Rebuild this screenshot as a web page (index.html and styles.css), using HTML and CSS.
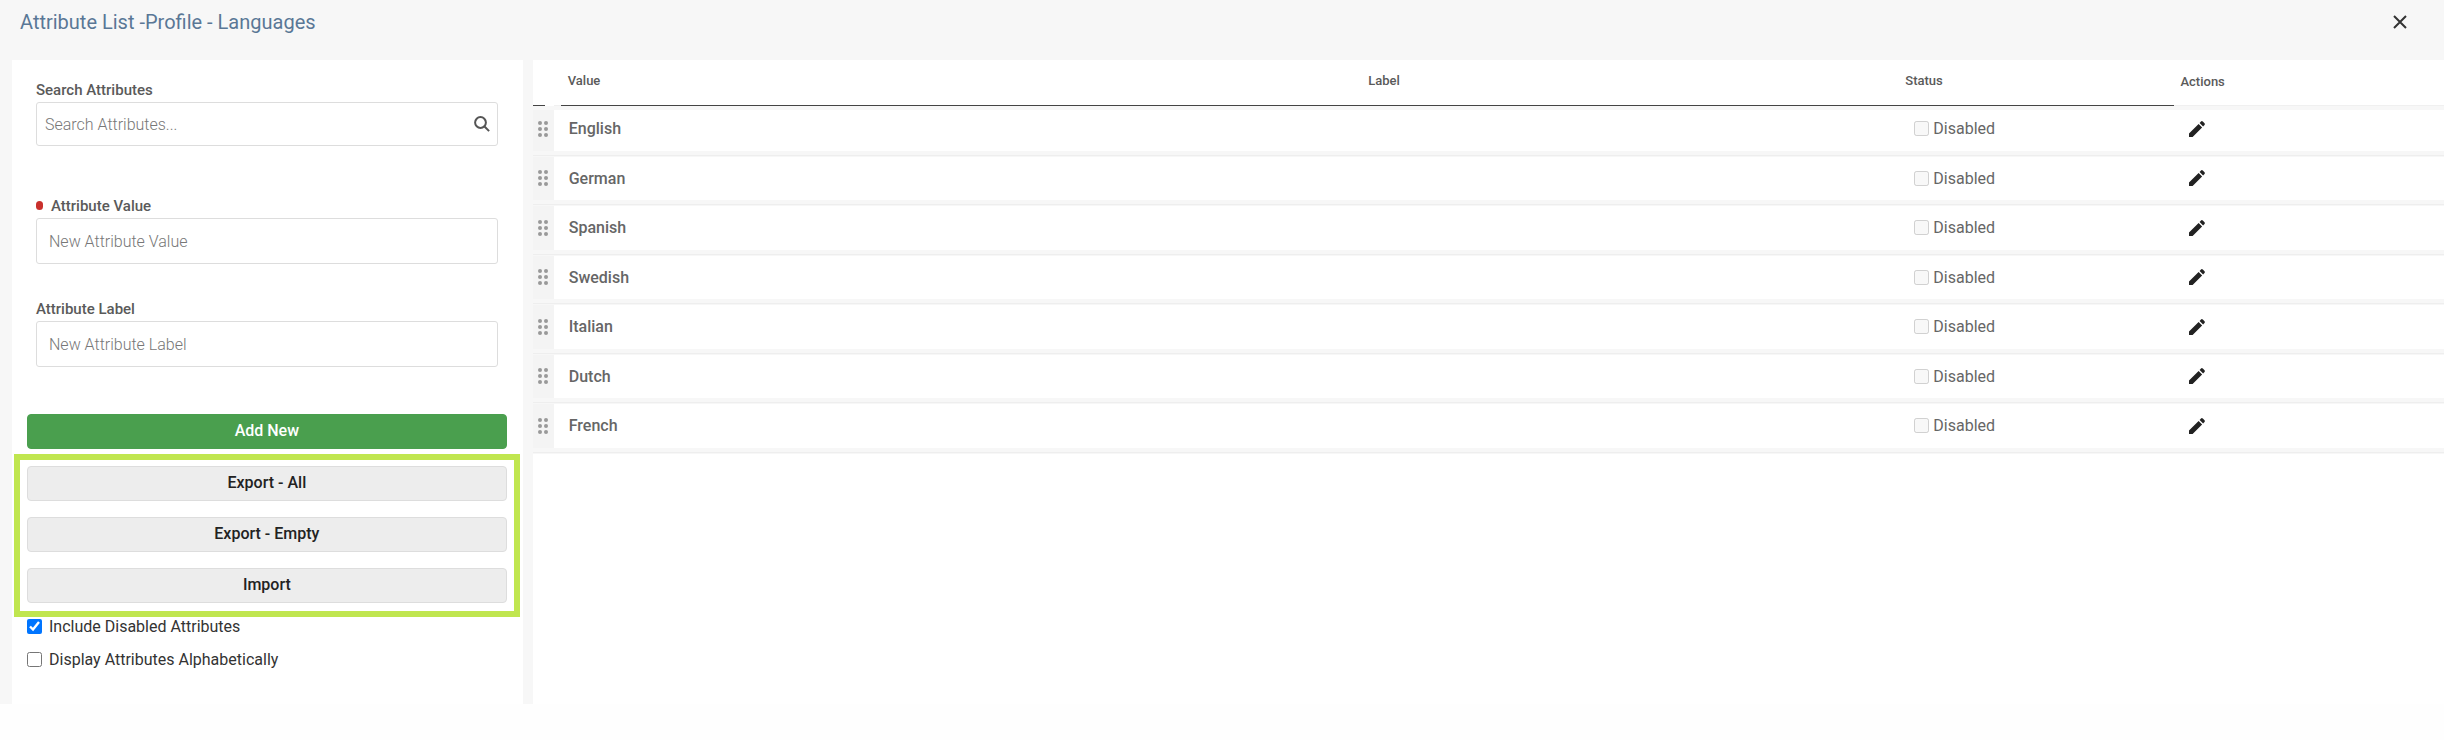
FILE: index.html
```html
<!DOCTYPE html>
<html lang="en">
<head>
<meta charset="utf-8">
<title>Attribute List</title>
<link rel="stylesheet" href="styles.css">
</head>
<body>
<svg class="sprite" aria-hidden="true">
  <symbol id="grip" viewBox="0 0 10 16"><circle cx="2" cy="2" r="2"/><circle cx="8" cy="2" r="2"/><circle cx="2" cy="8" r="2"/><circle cx="8" cy="8" r="2"/><circle cx="2" cy="14" r="2"/><circle cx="8" cy="14" r="2"/></symbol>
  <symbol id="pencil" viewBox="0 0 16 16"><path d="M0 16v-3.6L9.6 2.9l3.5 3.5L3.6 16zM10.6 1.900 12 .5q.9-.8 1.800 0l1.700 1.700q.8.9 0 1.800L14.100 5.400z"/></symbol>
</svg>
<div class="dialog">
  <header class="dialog-header">
    <h1 class="title">Attribute List -Profile - Languages</h1>
    <button class="close" type="button" aria-label="Close"><svg width="14" height="14" viewBox="0 0 14 14"><path d="M1 1l12 12M13 1L1 13"/></svg></button>
  </header>
  <main class="content">
    <form class="sidebar">
      <div class="field field-search">
        <label class="label" for="search">Search Attributes</label>
        <div class="search-box">
          <input class="search-input" id="search" type="text" placeholder="Search Attributes...">
          <svg class="search-icon" width="16" height="16" viewBox="0 0 16 16"><circle cx="6.500" cy="6.500" r="5.400"/><path d="M10.500 10.500l4.600 4.600"/></svg>
        </div>
      </div>
      <div class="field field-value">
        <label class="label required" for="value">Attribute Value</label>
        <input class="input" id="value" type="text" placeholder="New Attribute Value">
      </div>
      <div class="field field-label">
        <label class="label" for="label">Attribute Label</label>
        <input class="input" id="label" type="text" placeholder="New Attribute Label">
      </div>
      <button class="button primary" type="button">Add New</button>
      <div class="highlight">
        <button class="button" type="button">Export - All</button>
        <button class="button" type="button">Export - Empty</button>
        <button class="button" type="button">Import</button>
      </div>
      <div class="options">
        <label class="option"><input class="check" type="checkbox" checked>Include Disabled Attributes</label>
        <label class="option"><input class="check" type="checkbox">Display Attributes Alphabetically</label>
      </div>
    </form>
    <section class="list">
      <table class="table">
        <colgroup><col class="col-grip"><col class="col-value"><col class="col-label"><col class="col-status"><col></colgroup>
        <thead>
          <tr><th class="th-grip"></th><th class="th-value">Value</th><th>Label</th><th>Status</th><th class="th-actions">Actions</th></tr>
        </thead>
        <tbody>
          <tr><td class="grip"><svg class="grip-icon"><use href="#grip"/></svg></td><td class="name">English</td><td></td><td><label class="status"><input class="check" type="checkbox" disabled>Disabled</label></td><td><button class="edit" type="button" aria-label="Edit English"><svg class="edit-icon"><use href="#pencil"/></svg></button></td></tr>
          <tr><td class="grip"><svg class="grip-icon"><use href="#grip"/></svg></td><td class="name">German</td><td></td><td><label class="status"><input class="check" type="checkbox" disabled>Disabled</label></td><td><button class="edit" type="button" aria-label="Edit German"><svg class="edit-icon"><use href="#pencil"/></svg></button></td></tr>
          <tr><td class="grip"><svg class="grip-icon"><use href="#grip"/></svg></td><td class="name">Spanish</td><td></td><td><label class="status"><input class="check" type="checkbox" disabled>Disabled</label></td><td><button class="edit" type="button" aria-label="Edit Spanish"><svg class="edit-icon"><use href="#pencil"/></svg></button></td></tr>
          <tr><td class="grip"><svg class="grip-icon"><use href="#grip"/></svg></td><td class="name">Swedish</td><td></td><td><label class="status"><input class="check" type="checkbox" disabled>Disabled</label></td><td><button class="edit" type="button" aria-label="Edit Swedish"><svg class="edit-icon"><use href="#pencil"/></svg></button></td></tr>
          <tr><td class="grip"><svg class="grip-icon"><use href="#grip"/></svg></td><td class="name">Italian</td><td></td><td><label class="status"><input class="check" type="checkbox" disabled>Disabled</label></td><td><button class="edit" type="button" aria-label="Edit Italian"><svg class="edit-icon"><use href="#pencil"/></svg></button></td></tr>
          <tr><td class="grip"><svg class="grip-icon"><use href="#grip"/></svg></td><td class="name">Dutch</td><td></td><td><label class="status"><input class="check" type="checkbox" disabled>Disabled</label></td><td><button class="edit" type="button" aria-label="Edit Dutch"><svg class="edit-icon"><use href="#pencil"/></svg></button></td></tr>
          <tr><td class="grip"><svg class="grip-icon"><use href="#grip"/></svg></td><td class="name">French</td><td></td><td><label class="status"><input class="check" type="checkbox" disabled>Disabled</label></td><td><button class="edit" type="button" aria-label="Edit French"><svg class="edit-icon"><use href="#pencil"/></svg></button></td></tr>
        </tbody>
      </table>
    </section>
  </main>
</div>
</body>
</html>
```
FILE: styles.css
```css
* { box-sizing: border-box; }
body { margin: 0; background: #fefefe; font-family: Roboto, "Liberation Sans", sans-serif; font-size: 16px; color: #333; }
.sprite { display: none; }
.dialog { background: #f7f7f7; padding-left: 12px; }
.dialog-header { display: flex; align-items: center; justify-content: space-between; height: 44px; margin-bottom: 16px; padding: 0 37px 0 8px; }
.title { margin: 0; font-size: 20px; line-height: 24px; font-weight: 400; color: #5a7796; }
.close { display: flex; padding: 0; border: 0; background: none; }
.close svg { stroke: #333; stroke-width: 2; fill: none; }
.content { display: grid; grid-template-columns: 21% 1fr; column-gap: 10px; }

.sidebar { background: #fff; padding: 19px 16px 35px 15px; }
.field { display: flex; flex-direction: column; margin: 0 9px; }
.field-search { margin-bottom: 49px; }
.field-value { margin-bottom: 34px; }
.field-label { margin-bottom: 47px; }
.label { display: flex; align-items: center; height: 23px; padding-bottom: 2px; font-size: 15px; font-weight: 500; color: #5a5a5a; }
.required::before { content: ""; width: 7px; height: 9px; margin-right: 8px; border-radius: 4px; background: #c9302c; }
.search-box { display: flex; align-items: center; height: 44px; border: 1px solid #ddd; border-radius: 3px; padding: 0 7px 0 8px; }
.search-input { flex: 1; min-width: 0; padding: 0; border: 0; outline: 0; background: none; font: inherit; }
.search-icon { fill: none; stroke: #555; stroke-width: 2; }
.input { width: 100%; height: 46px; border: 1px solid #ddd; border-radius: 3px; padding: 0 12px; font: inherit; background: #fff; }
::placeholder { color: #777; font-weight: 300; opacity: 1; }

.button { display: block; width: 100%; height: 35px; padding: 0 0 2px; border: 1px solid #ddd; border-radius: 4px; background: #ededed; font: inherit; font-weight: 500; color: #222; }
.primary { border-color: #4a9f4e; background: #4a9f4e; color: #fff; }
.highlight { display: grid; gap: 16px; margin: 5px -13px 0; padding: 6px 7px 8px; border: 6px solid #c0e64f; }
.options { display: grid; gap: 14px; }
.option { display: flex; align-items: center; gap: 7px; line-height: 19px; }
.check { width: 15px; height: 15px; margin: 0; }

.list { background: #fff; }
.table { width: 100%; table-layout: fixed; border-collapse: separate; border-spacing: 0; }
.col-grip { width: 21px; }
.col-value { width: 42.2%; }
.col-label { width: 28.1%; }
.col-status { width: 14.5%; }
.table th { height: 50px; padding: 0 8px 14px; border-bottom: 4px solid #f7f7f7; text-align: left; vertical-align: bottom; line-height: 22px; font-size: 13px; font-weight: 500; color: #5a5a5a; background: linear-gradient(#444, #444) left bottom / 100% 1px no-repeat padding-box; }
.table .th-grip { background-size: 12px 1px; }
.table .th-value { padding-left: 14px; background-image: linear-gradient(to right, #f0f0f0 7px, #444 7px); }
.table .th-actions { padding-left: 6px; padding-bottom: 13px; background-image: linear-gradient(#f0f0f0, #f0f0f0); }
.table td { height: 49px; padding: 0 0 7px; background: linear-gradient(#f7f7f7 4px, #eee 4px, #eee 5px, #f7f7f7 5px) left bottom / 100% 6px no-repeat; }
.table tr:nth-child(odd) td { height: 50px; }
.table tr:first-child td { height: 47px; padding-bottom: 10px; }
.table .grip { background-color: #f4f4f4; }
.grip-icon { display: block; width: 10px; height: 16px; margin: 0 auto; fill: #999; }
.table .name { padding-left: 15px; font-weight: 500; color: #666; }
.status { display: flex; align-items: center; gap: 4px; padding-left: 17px; color: #666; }
.edit { display: block; margin-left: 15px; padding: 0; border: 0; background: none; }
.edit-icon { display: block; width: 16px; height: 16px; fill: #222; }
```
